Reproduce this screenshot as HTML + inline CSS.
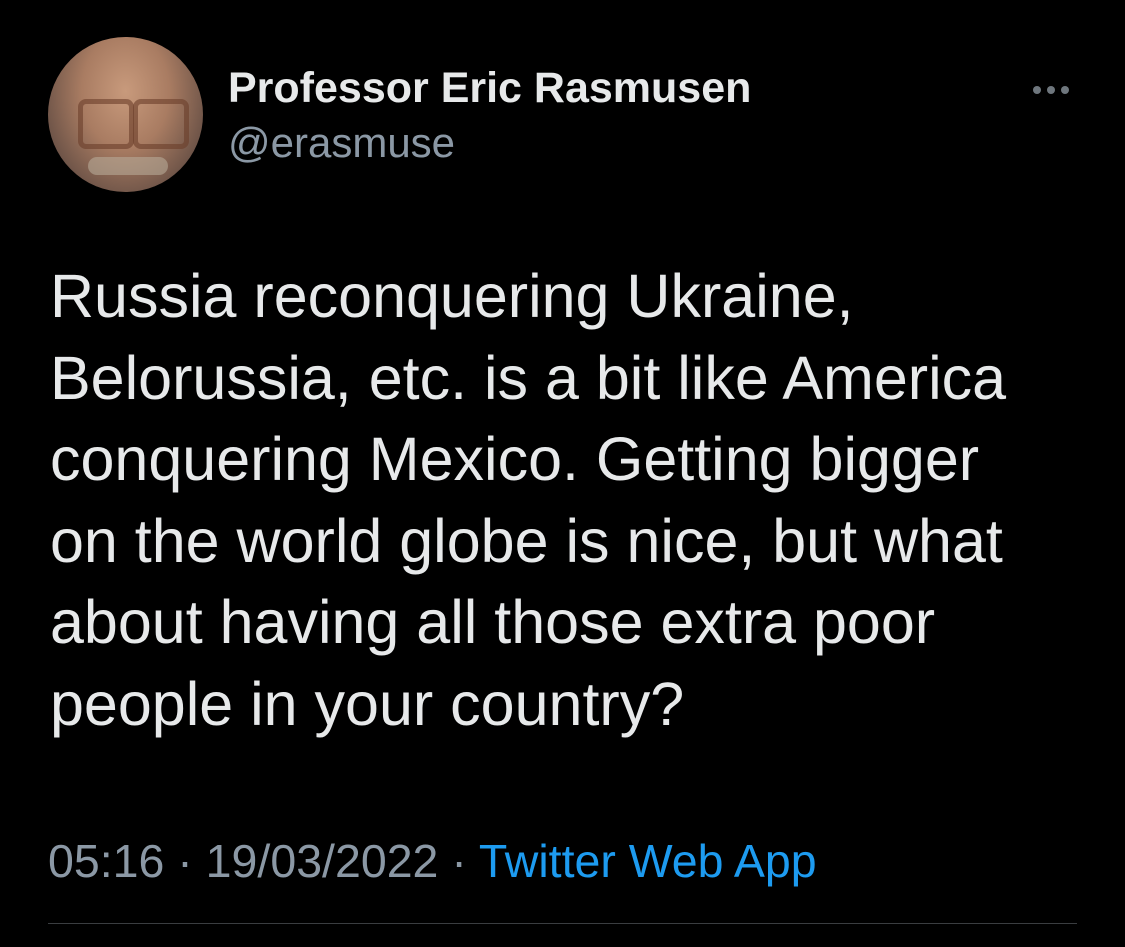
<!DOCTYPE html>
<html><head><style>
html,body{margin:0;padding:0;background:#000;width:1125px;height:947px;overflow:hidden;font-family:"Liberation Sans",sans-serif;}
div{line-height:1}
.av{position:absolute;left:48px;top:37px;width:155px;height:155px;border-radius:50%;
background:radial-gradient(ellipse at 50% 35%,#c89a7c 0%,#a97c62 40%,#6e5448 75%,#4a3c38 100%);overflow:hidden}
.gl{position:absolute;top:62px;width:46px;height:40px;border:5px solid #6a3e2a;border-radius:8px;opacity:.6}
.name{position:absolute;left:228px;top:67px;font-weight:bold;font-size:43px;color:#e7e9ea;white-space:nowrap}
.handle{position:absolute;left:228px;top:122px;font-size:42px;color:#8b98a5;white-space:nowrap}
.dot{position:absolute;top:86px;width:8px;height:8px;border-radius:50%;background:#6e767d}
.txt{position:absolute;left:50px;top:256px;width:1070px;font-size:61px;line-height:81.5px;color:#e7e9ea;white-space:nowrap}
.foot{position:absolute;left:48px;top:838px;font-size:46.5px;color:#8b98a5;white-space:nowrap}
.foot span{color:#1d9bf0}
.hr{position:absolute;left:48px;top:923px;width:1029px;height:1px;background:#3a3d40}
</style></head><body>
<div class="av">
<div class="gl" style="left:30px"></div><div class="gl" style="left:85px"></div>
<div style="position:absolute;left:40px;top:120px;width:80px;height:18px;background:#b8aa98;border-radius:10px;opacity:.6"></div>
</div>
<div class="name">Professor Eric Rasmusen</div>
<div class="handle">@erasmuse</div>
<div class="dot" style="left:1033px"></div><div class="dot" style="left:1047px"></div><div class="dot" style="left:1061px"></div>
<div class="txt">Russia reconquering Ukraine,<br>Belorussia, etc. is a bit like America<br>conquering Mexico. Getting bigger<br>on the world globe is nice, but what<br>about having all those extra poor<br>people in your country?</div>
<div class="foot">05:16 · 19/03/2022 · <span>Twitter Web App</span></div>
<div class="hr"></div>
</body></html>
